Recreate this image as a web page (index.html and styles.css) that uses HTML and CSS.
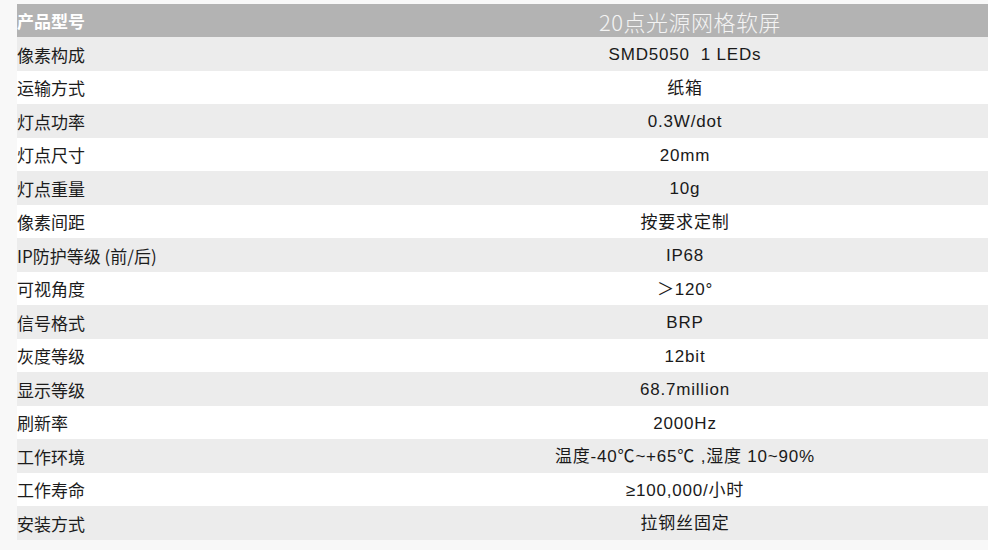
FILE: index.html
```html
<!DOCTYPE html>
<html lang="zh">
<head>
<meta charset="utf-8">
<title>20点光源网格软屏</title>
<link rel="stylesheet" href="styles.css">
</head>
<body>
<div class="spec">
  <div class="row head"><div class="label">产品型号</div><div class="value title">20点光源网格软屏</div></div>
  <div class="row odd"><div class="label">像素构成</div><div class="value">SMD5050&nbsp; 1 LEDs</div></div>
  <div class="row"><div class="label">运输方式</div><div class="value">纸箱</div></div>
  <div class="row odd"><div class="label">灯点功率</div><div class="value">0.3W/dot</div></div>
  <div class="row"><div class="label">灯点尺寸</div><div class="value">20mm</div></div>
  <div class="row odd"><div class="label">灯点重量</div><div class="value">10g</div></div>
  <div class="row"><div class="label">像素间距</div><div class="value">按要求定制</div></div>
  <div class="row odd"><div class="label">IP防护等级 (前/后)</div><div class="value">IP68</div></div>
  <div class="row"><div class="label">可视角度</div><div class="value">＞120°</div></div>
  <div class="row odd"><div class="label">信号格式</div><div class="value">BRP</div></div>
  <div class="row"><div class="label">灰度等级</div><div class="value">12bit</div></div>
  <div class="row odd"><div class="label">显示等级</div><div class="value">68.7million</div></div>
  <div class="row"><div class="label">刷新率</div><div class="value">2000Hz</div></div>
  <div class="row odd"><div class="label">工作环境</div><div class="value">温度-40℃~+65℃ ,湿度 10~90%</div></div>
  <div class="row"><div class="label">工作寿命</div><div class="value">≥100,000/小时</div></div>
  <div class="row odd"><div class="label">安装方式</div><div class="value">拉钢丝固定</div></div>
</div>
</body>
</html>
```
FILE: styles.css
```css
html, body {
  margin: 0;
  padding: 0;
  background: #f8f8f8;
}
body {
  width: 988px;
  height: 550px;
  overflow: hidden;
  font-family: "Liberation Sans", "Noto Sans CJK SC", sans-serif;
  color: #1c1c1c;
}
.spec {
  padding: 4px 0 0 17px;
  display: flex;
  flex-direction: column;
}
.row {
  display: grid;
  grid-template-columns: 365px 1fr;
  height: 33.5px;
  align-items: center;
  background: #ffffff;
}
.row.odd {
  background: #ececec;
}
.row.head {
  height: 33px;
  background: #b3b3b3;
  color: #ffffff;
}
.label {
  font-family: "Noto Sans CJK SC", sans-serif;
  font-size: 17px;
  line-height: 20px;
  padding-top: 2px;
}
.head .label {
  font-weight: 700;
  padding-top: 0;
}
.value {
  text-align: center;
  font-size: 17px;
  letter-spacing: 0.8px;
  line-height: 20px;
  padding-top: 3px;
  color: #1a1a1a;
  font-family: "Liberation Sans", "Noto Sans CJK SC", sans-serif;
}
.value.title {
  font-family: "Noto Sans CJK SC", sans-serif;
  font-weight: 300;
  font-size: 22px;
  letter-spacing: 0.5px;
  padding: 0 0 0 10px;
  color: #f4f4f4;
}
```
